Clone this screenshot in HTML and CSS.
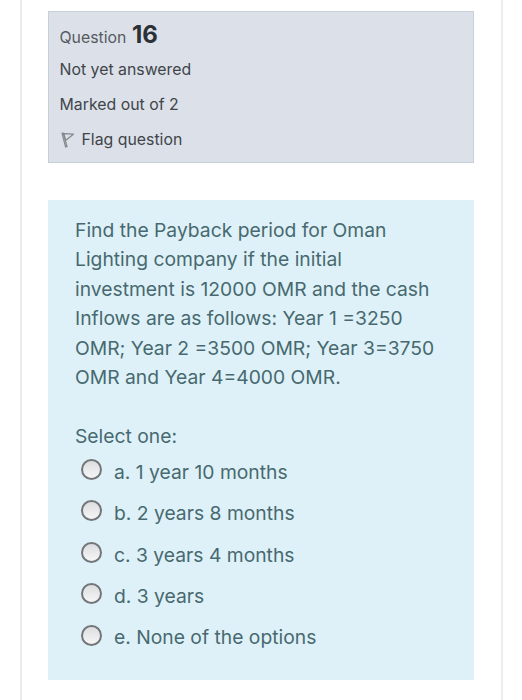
FILE: index.html
```html
<!DOCTYPE html>
<html lang="en">
<head>
<meta charset="UTF-8">
<meta name="viewport" content="width=device-width, initial-scale=1.0">
<title>Quiz - Question 16</title>
<link rel="stylesheet" href="styles.css">
</head>
<body>
    <div class="page">
        <div class="info">
            <h3 class="no">Question <span class="qno">16</span></h3>
            <div class="state">Not yet answered</div>
            <div class="grade">Marked out of 2</div>
            <div class="flag">
                <svg class="flag-icon" width="14" height="16" viewBox="0 0 14 16" fill="none" stroke="#84888c" stroke-width="1.2" stroke-linejoin="round">
                    <path d="M1 1.2 L4.6 15 L6 14.6 L2.4 1.2 Z"/>
                    <path d="M2.6 1.6 L12.4 2.2 L4.8 8.2 Z"/>
                </svg>
                <span class="flag-text">Flag question</span>
            </div>
        </div>
        <form class="formulation">
            <div class="qtext">
                Find the Payback period for Oman<br>
                Lighting company if the initial<br>
                investment is 12000 OMR and the cash<br>
                Inflows are as follows: Year 1 =3250<br>
                OMR; Year 2 =3500 OMR; Year 3=3750<br>
                OMR and Year 4=4000 OMR.
            </div>
            <div class="prompt">Select one:</div>
            <div class="answer">
                <label class="option"><input type="radio" name="answer" value="0"><span>a. 1 year 10 months</span></label>
                <label class="option"><input type="radio" name="answer" value="1"><span>b. 2 years 8 months</span></label>
                <label class="option"><input type="radio" name="answer" value="2"><span>c. 3 years 4 months</span></label>
                <label class="option"><input type="radio" name="answer" value="3"><span>d. 3 years</span></label>
                <label class="option"><input type="radio" name="answer" value="4"><span>e. None of the options</span></label>
            </div>
        </form>
    </div>
</body>
</html>
```

FILE: styles.css
```css
* {
    box-sizing: border-box;
}
body {
    margin: 0;
    background-color: #fff;
    font-family: Inter, "Liberation Sans", sans-serif;
}
.page {
    width: 483px;
    height: 700px;
    margin-left: 20px;
    padding: 11px 27px 0 26px;
    border-left: 2px solid #ececee;
    border-right: 2px solid #ececee;
    overflow: hidden;
}
.info {
    height: 152px;
    padding: 5px 10px 0 10.5px;
    border: 1px solid #c8d0d7;
    background-color: #dce0e8;
    color: #40454a;
    font-size: 15.85px;
    line-height: 35px;
}
.no {
    height: 35px;
    margin: 0;
    color: #565b61;
    font-size: 15.85px;
    font-weight: 400;
    line-height: 36px;
}
.qno {
    margin-left: 1px;
    color: #2b3036;
    font-size: 24px;
    font-weight: 700;
}
.flag {
    display: flex;
    align-items: center;
}
.flag-icon {
    margin: 1px 7px 0 1px;
}
.formulation {
    height: 480px;
    margin-top: 37px;
    padding: 16px 27px 0;
    background-color: #def1f8;
    color: #47696f;
    font-size: 19.3px;
    line-height: 29.4px;
}
.qtext {
    white-space: nowrap;
}
.prompt {
    margin-top: 30px;
}
.option {
    display: flex;
    align-items: center;
    height: 41.4px;
}
.option input {
    appearance: none;
    width: 21px;
    height: 21px;
    margin: -6px 12px 0 6px;
    border: 2px solid #737678;
    border-radius: 50%;
    background: linear-gradient(#dcdddf, #f6f6f7);
}
```
